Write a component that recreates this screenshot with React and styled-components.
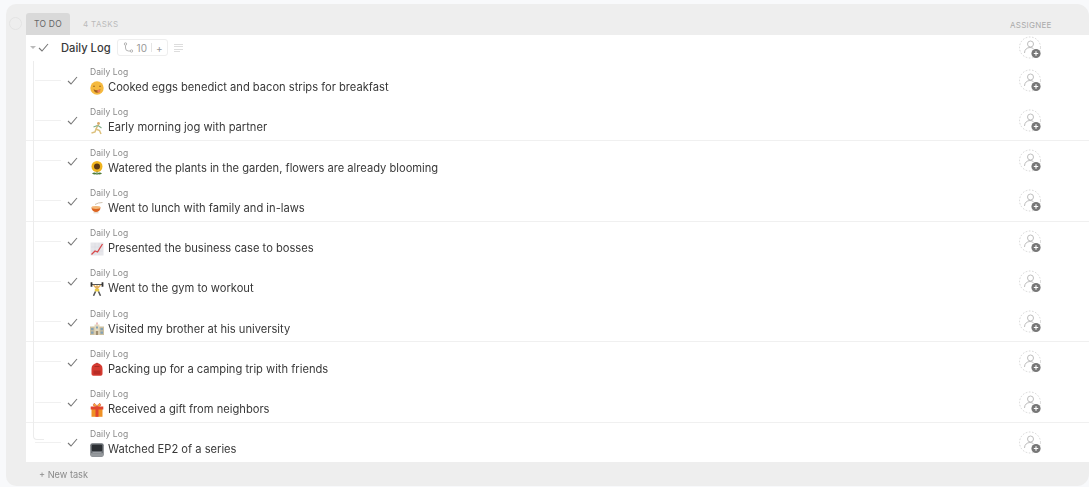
import React from "react";
import styled, { createGlobalStyle } from "styled-components";

const Global = createGlobalStyle`
  html, body { margin: 0; padding: 0; background: #f8f9fb; overflow: hidden; }
  #root { width: 1089px; height: 487px; filter: blur(0.45px); }
`;
const Page = styled.div`
  box-sizing: border-box; width: 1089px; height: 487px; padding: 4px 0 1px 6px;
  font-family: Inter, "Liberation Sans", sans-serif; color: #333;
`;
const Panel = styled.div`
  height: 100%; background: #eeeeee; border-radius: 10px 12px 12px 10px;
  padding: 9px 0 0 20px; box-sizing: border-box; display: flex; flex-direction: column; position: relative;
`;
const Collapse = styled.span`
  position: absolute; left: 3px; top: 13px; width: 13px; height: 13px; border-radius: 50%;
  border: 1px solid #e4e4e4; box-sizing: border-box;
`;
const Head = styled.div`display: flex; align-items: center; height: 22px;`;
const Tab = styled.div`
  width: 44px; height: 22px; background: #d9d9d9; border-radius: 3px 3px 0 0; font-size: 8.5px; color: #666;
  display: flex; align-items: center; justify-content: center; letter-spacing: .2px;
`;
const Count = styled.div`margin-left: 13px; font-size: 8px; color: #bbb; letter-spacing: .35px;`;
const ColTitle = styled.div`margin-left: auto; width: 79px; font-size: 8px; color: #aaa; letter-spacing: .25px; padding-top: 1px;`;
const Sheet = styled.div`background: #fff; height: 427px; display: flex; flex-direction: column;`;
const GroupRow = styled.div`height: 25.6px; display: flex; align-items: center; padding-right: 45px; flex: none;`;
const Caret = styled.span`margin-left: 4px; width: 0; height: 0; border: 3px solid transparent; border-top: 3.5px solid #bbb; border-bottom: 0;`;
const GroupCheck = styled.span`margin-left: 3px; display: flex; color: #777; transform: translateX(-1px);`;
const GroupName = styled.span`margin-left: 11px; font-size: 11.2px; font-weight: 500; color: #3a3a3a;`;
const Chip = styled.span`
  margin-left: 6px; height: 15px; padding: 0 4px 0 5px; border: 1px solid #eee; border-radius: 3px; display: flex; align-items: center;
  gap: 3px; font-size: 10px; color: #999;
`;
const ChipBar = styled.span`width: 1px; height: 9px; background: #e5e5e5; margin: 0 1px;`;
const Lines = styled.span`margin-left: 6px; display: flex; flex-direction: column; gap: 1.5px; width: 9px;`;
const LineBit = styled.i`display: block; height: 1px; background: #ddd; width: ${p => p.$w}px;`;
const Assign = styled.span`margin-left: auto; margin-top: 3px; display: flex; flex: none;`;
const List = styled.div`position: relative; flex: 1; display: flex; flex-direction: column;
  &::before { content: ""; position: absolute; left: 7px; top: 0; bottom: 22px; width: 10px;
    border-left: 1px solid #ececec; border-bottom: 1px solid #ececec; border-bottom-left-radius: 4px; }
`;
const Row = styled.div`
  flex: 1 1 0; min-height: 0; box-sizing: border-box; display: flex; align-items: center; padding: 0 45px 0 9px;
  border-bottom: 1px solid ${p => (p.$divided ? "#f0f0f0" : "transparent")};
  &:last-child { border-bottom: 0; }
`;
const Stub = styled.span`width: 26px; height: 1px; background: #f0f0f0; flex: none;`;
const Check = styled.span`margin-left: 6px; display: flex; color: #777; flex: none; margin-top: 1px;`;
const Body = styled.div`margin-left: 12px; display: flex; flex-direction: column; gap: 2px; margin-top: 2px;`;
const Crumb = styled.div`font-size: 8.5px; line-height: 11px; color: #888; letter-spacing: .1px;`;
const Title = styled.div`display: flex; align-items: center; gap: 4px; font-size: 11.15px; line-height: 15px; color: #383838;`;
const NewTask = styled.div`height: 24px; display: flex; align-items: center; padding-left: 13px; font-size: 9.2px; color: #8a8a8a;`;

const CheckIcon = () => (
  <svg width="11" height="9" viewBox="0 0 11 9" fill="none" stroke="currentColor" strokeWidth="1.1"><path d="M1 5l3 3 6-7" /></svg>
);
const AssignIcon = () => (
  <svg width="26" height="26" viewBox="0 0 26 26" fill="none">
    <circle cx="12" cy="11.500" r="10.500" stroke="#ccc" strokeWidth=".8" strokeDasharray="1.600 1.600" />
    <circle cx="12.500" cy="8" r="3" stroke="#b5b5b5" strokeWidth=".9" />
    <path d="M6.500 17c0-3.500 2.500-5.500 5.500-5.500 1.400 0 2.600.4 3.500 1.200" stroke="#b5b5b5" strokeWidth=".9" />
    <circle cx="18" cy="17.500" r="4.600" fill="#777" />
    <path d="M15.800 17.500h4.400M18 15.300v4.400" stroke="#fff" strokeWidth="1.100" />
  </svg>
);
const Em = ({ children }) => <svg width="14" height="14" viewBox="0 0 14 14">{children}</svg>;
const emojis = {
  yum: <Em><circle cx="7" cy="7" r="6.700" fill="#f5b93e" /><path d="M3 5.500q1-1 2 0M9 5.500q1-1 2 0" stroke="#8a5a1a" strokeWidth=".8" fill="none" /><path d="M3.500 8.300q3.500 2 7 0-1 3.500-3.500 3.500T3.500 8.300z" fill="#a0601c" /><circle cx="8.800" cy="10" r="1.500" fill="#ee7a5a" /></Em>,
  run: <Em><circle cx="8.500" cy="2.500" r="1.400" fill="#d8a868" /><path d="M8 4 6 8l3.500 1.500 1.500 3.500M6 8l-1 3-3.500 1" stroke="#dcc07c" strokeWidth="1.500" fill="none" /><path d="M8 4.500l3.500 2.500M7.500 4.500 3.500 6" stroke="#7fae88" strokeWidth="1.100" /></Em>,
  sun: <Em><circle cx="7" cy="5.500" r="5.500" fill="#f0b41e" /><circle cx="7" cy="5.500" r="3" fill="#5e3a14" /><path d="M7 10.500V14" stroke="#4c7a3a" strokeWidth="1" /><path d="M7 12.500Q4 10.500 2 12.500Q5 14.500 7 12.500M7 12.500Q10 10.500 12 12.500Q9 14.500 7 12.500" fill="#4c7a3a" /></Em>,
  bowl: <Em><path d="M1.500 6.500h9a4.500 4.500 0 0 1-9 0z" fill="#dc6420" /><ellipse cx="6" cy="6.500" rx="4.500" ry="1.400" fill="#f3b878" /><path d="M5 3.500q3-2 7.500-2" stroke="#cbbba8" strokeWidth=".9" fill="none" /><path d="M3.500 11.800h5" stroke="#dccdbd" strokeWidth="1" /></Em>,
  chart: <Em><rect x=".5" y=".5" width="13" height="13" fill="#e6e6ea" /><path d="M1 5h12M1 9h12M5 1v12M9 1v12" stroke="#d6d6dc" strokeWidth=".5" /><path d="M1.500 12.500l3.500-3.500 2.500 1L12.500 2" stroke="#d9484a" strokeWidth="1.300" fill="none" /></Em>,
  gym: <Em><path d="M1 2.500H13" stroke="#555" strokeWidth="1" /><path d="M1.500 .3v4.500M12.500 .3v4.500" stroke="#333" strokeWidth="1.800" /><circle cx="7" cy="5" r="1.700" fill="#e2b060" /><path d="M7 7 3.500 3M7 7l3.500-4" stroke="#e2b060" strokeWidth="1.300" /><path d="M4.800 7h4.400v2.500H4.800z" fill="#e8cc40" /><path d="M5.500 9.500 3.500 13.800M8.500 9.500l2 4.300" stroke="#555" strokeWidth="1.500" /></Em>,
  school: <Em><path d="M0 4.500h14v8.500H0z" fill="#cbbf9f" /><path d="M4.500 2.500h5v10.500h-5z" fill="#e4d9bd" /><path d="M7 .5v2" stroke="#c55" strokeWidth=".8" /><path d="M1 6h2.500v2.200H1zM10.500 6H13v2.200h-2.500zM1 9.500h2.500v2.200H1zM10.500 9.500H13v2.200h-2.500zM6 4.500h2v2H6z" fill="#84a2b6" /><path d="M5.800 9h2.400v4H5.800z" fill="#a08d6e" /></Em>,
  bag: <Em><path d="M5 2.500Q7-.5 9 2.500" stroke="#a52a22" strokeWidth="1" fill="none" /><path d="M1.500 7q0-5.500 5.500-5.500T12.500 7v5q0 1.800-1.800 1.800H3.300Q1.500 13.800 1.500 12z" fill="#d53a30" /><path d="M3.500 8.500h7v4h-7z" fill="#b82c25" /><path d="M4.500 4.500h5" stroke="#a52a22" strokeWidth=".9" /></Em>,
  gift: <Em><path d="M1.500 6h11v7.800h-11z" fill="#ef9226" /><path d="M.7 3.500h12.600v3H.7z" fill="#e0452e" /><path d="M5.500 3.500h3v10.300h-3z" fill="#e0452e" /><path d="M7 3.500Q2.500 3.500 3.500 1.200T7 3.500Q11.500 3.500 10.500 1.200T7 3.500" fill="#f6b73c" stroke="#d8402c" strokeWidth=".6" /></Em>,
  tv: <Em><rect x=".3" y=".3" width="13.400" height="13.400" rx="2" fill="#6a6f74" /><rect x="1.800" y="1.800" width="10.400" height="6.500" rx="1.200" fill="#2b2f33" /><path d="M1 10.200h12v3H1z" fill="#95999d" /><path d="M2.500 9.300h9" stroke="#b5b9bc" strokeWidth=".8" /></Em>,
};
const tasks = [
  ["yum", "Cooked eggs benedict and bacon strips for breakfast", false],
  ["run", "Early morning jog with partner", true],
  ["sun", "Watered the plants in the garden, flowers are already blooming", false],
  ["bowl", "Went to lunch with family and in-laws", true],
  ["chart", "Presented the business case to bosses", false],
  ["gym", "Went to the gym to workout", false],
  ["school", "Visited my brother at his university", true],
  ["bag", "Packing up for a camping trip with friends", false],
  ["gift", "Received a gift from neighbors", true],
  ["tv", "Watched EP2 of a series", false],
];

export default function App() {
  return (
    <Page>
      <Global />
      <Panel>
        <Collapse />
        <Head>
          <Tab>TO DO</Tab>
          <Count>4 TASKS</Count>
          <ColTitle>ASSIGNEE</ColTitle>
        </Head>
        <Sheet>
          <GroupRow>
            <Caret />
            <GroupCheck><CheckIcon /></GroupCheck>
            <GroupName>Daily Log</GroupName>
            <Chip>
              <svg width="11" height="11" viewBox="0 0 11 11" fill="none" stroke="#aaa" strokeWidth=".9"><circle cx="2.500" cy="2" r="1.200" /><circle cx="8.500" cy="9" r="1.200" /><path d="M2.500 3.500V6q0 3 3 3h1.500" /></svg>
              10<ChipBar />+
            </Chip>
            <Lines><LineBit $w={9} /><LineBit $w={9} /><LineBit $w={9} /><LineBit $w={6} /></Lines>
            <Assign><AssignIcon /></Assign>
          </GroupRow>
          <List>
            {tasks.map(([e, t, d]) => (
              <Row key={t} $divided={d}>
                <Stub />
                <Check><CheckIcon /></Check>
                <Body>
                  <Crumb>Daily Log</Crumb>
                  <Title>{emojis[e]}<span>{t}</span></Title>
                </Body>
                <Assign><AssignIcon /></Assign>
              </Row>
            ))}
          </List>
        </Sheet>
        <NewTask>+ New task</NewTask>
      </Panel>
    </Page>
  );
}
